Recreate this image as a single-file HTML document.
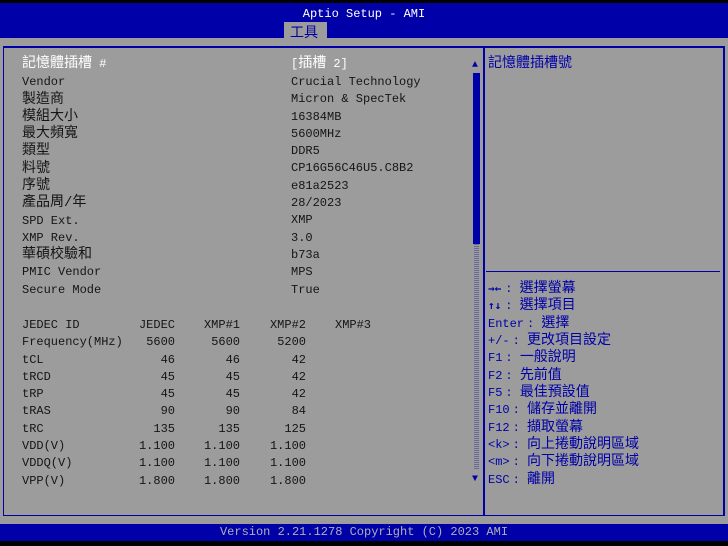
<!DOCTYPE html>
<html><head><meta charset="utf-8"><style>
body{margin:0;width:728px;height:546px;background:#000;position:relative;overflow:hidden;font-family:"Liberation Mono","Noto Sans CJK TC",monospace;font-size:12px;}
.a{position:absolute;white-space:pre;line-height:16px;}
.c{font-size:14px}
#hdr{position:absolute;left:0;top:3px;width:728px;height:35px;background:#0000a8;}
#body{position:absolute;left:0;top:38px;width:728px;height:486px;background:#9c9c9c;}
#box{position:absolute;left:3px;top:46px;width:719px;height:467px;border:1px solid #0000a8;border-width:2px 2px 1px 1px;}
#div{position:absolute;left:483px;top:46px;width:2px;height:469px;background:#0000a8;}
#ft{position:absolute;left:0;top:524px;width:728px;height:17px;background:#0000a8;}
.k{color:#151515}.w{color:#fff}.b{color:#0000a8}
.r{text-align:right;width:60px;line-height:17.3px}
.t{line-height:17.3px}
.ar{font-family:"DejaVu Sans Mono",monospace;font-weight:bold;font-size:11px}
</style></head><body>
<div id="hdr"></div>
<div id="body"></div>
<div class="a" style="left:0;width:728px;text-align:center;top:6px;color:#fff">Aptio Setup - AMI</div>
<div style="position:absolute;left:284px;top:22px;width:43px;height:16px;background:#9c9c9c;z-index:2"></div>
<div style="position:absolute;left:290px;top:25px;height:14px;line-height:14px;font-size:14px;color:#0000a8;z-index:3;white-space:pre;font-family:'Noto Sans CJK TC',sans-serif">工具</div>
<div id="box"></div>
<div id="div"></div>
<div style="position:absolute;left:473px;top:73px;width:7px;height:171px;background:#0000a8"></div>
<div style="position:absolute;left:474px;top:244px;width:5px;height:226px;background:repeating-linear-gradient(#6a6a9a 0 1px,#9c9c9c 1px 2px)"></div>
<div class="a b" style="left:472px;top:58px;font-size:10px">▲</div>
<div class="a b" style="left:472px;top:472px;font-size:10px">▼</div>
<div style="position:absolute;left:486px;top:271px;width:234px;height:1px;background:#0000a8"></div>

<div class="a w" style="left:22px;top:56px"><span class="c">記憶體插槽</span> #</div>
<div class="a w" style="left:291px;top:56px">[<span class="c">插槽</span> 2]</div>
<div class="a k" style="left:22px;top:74px">Vendor</div>
<div class="a k c" style="left:22px;top:92px">製造商</div>
<div class="a k c" style="left:22px;top:109px">模組大小</div>
<div class="a k c" style="left:22px;top:126px">最大頻寬</div>
<div class="a k c" style="left:22px;top:143px">類型</div>
<div class="a k c" style="left:22px;top:161px">料號</div>
<div class="a k c" style="left:22px;top:178px">序號</div>
<div class="a k c" style="left:22px;top:195px">產品周/年</div>
<div class="a k" style="left:22px;top:213px">SPD Ext.</div>
<div class="a k" style="left:22px;top:230px">XMP Rev.</div>
<div class="a k c" style="left:22px;top:247px">華碩校驗和</div>
<div class="a k" style="left:22px;top:264px">PMIC Vendor</div>
<div class="a k" style="left:22px;top:282px">Secure Mode</div>
<div class="a k" style="left:291px;top:74px;line-height:17.3px">Crucial Technology
Micron &amp; SpecTek
16384MB
5600MHz
DDR5
CP16G56C46U5.C8B2
e81a2523
28/2023
XMP
3.0
b73a
MPS
True</div>

<div class="a k t" style="left:22px;top:317px">JEDEC ID
Frequency(MHz)
tCL
tRCD
tRP
tRAS
tRC
VDD(V)
VDDQ(V)
VPP(V)</div>
<div class="a k r" style="left:115px;top:317px">JEDEC
5600
46
45
45
90
135
1.100
1.100
1.800</div>
<div class="a k r" style="left:180px;top:317px">XMP#1
5600
46
45
45
90
135
1.100
1.100
1.800</div>
<div class="a k r" style="left:246px;top:317px">XMP#2
5200
42
42
42
84
125
1.100
1.100
1.800</div>
<div class="a k" style="left:335px;top:317px">XMP#3</div>

<div class="a b c" style="left:488px;top:56px">記憶體插槽號</div>
<div class="a b" style="left:488px;top:281px"><span class="ar">→←</span><span style="margin-left:4px">:</span> <span class="c">選擇螢幕</span></div>
<div class="a b" style="left:488px;top:298px"><span class="ar">↑↓</span><span style="margin-left:4px">:</span> <span class="c">選擇項目</span></div>
<div class="a b" style="left:488px;top:316px">Enter<span style="margin-left:3px">:</span> <span class="c">選擇</span></div>
<div class="a b" style="left:488px;top:333px">+/-<span style="margin-left:3px">:</span> <span class="c">更改項目設定</span></div>
<div class="a b" style="left:488px;top:350px">F1<span style="margin-left:3px">:</span> <span class="c">一般說明</span></div>
<div class="a b" style="left:488px;top:368px">F2<span style="margin-left:3px">:</span> <span class="c">先前值</span></div>
<div class="a b" style="left:488px;top:385px">F5<span style="margin-left:3px">:</span> <span class="c">最佳預設值</span></div>
<div class="a b" style="left:488px;top:402px">F10<span style="margin-left:3px">:</span> <span class="c">儲存並離開</span></div>
<div class="a b" style="left:488px;top:420px">F12<span style="margin-left:3px">:</span> <span class="c">擷取螢幕</span></div>
<div class="a b" style="left:488px;top:437px">&lt;k&gt;<span style="margin-left:3px">:</span> <span class="c">向上捲動說明區域</span></div>
<div class="a b" style="left:488px;top:454px">&lt;m&gt;<span style="margin-left:3px">:</span> <span class="c">向下捲動說明區域</span></div>
<div class="a b" style="left:488px;top:472px">ESC<span style="margin-left:3px">:</span> <span class="c">離開</span></div>

<div id="ft"></div>
<div class="a" style="left:0;width:728px;text-align:center;top:524px;color:#b0b0b0">Version 2.21.1278 Copyright (C) 2023 AMI</div>
</body></html>
